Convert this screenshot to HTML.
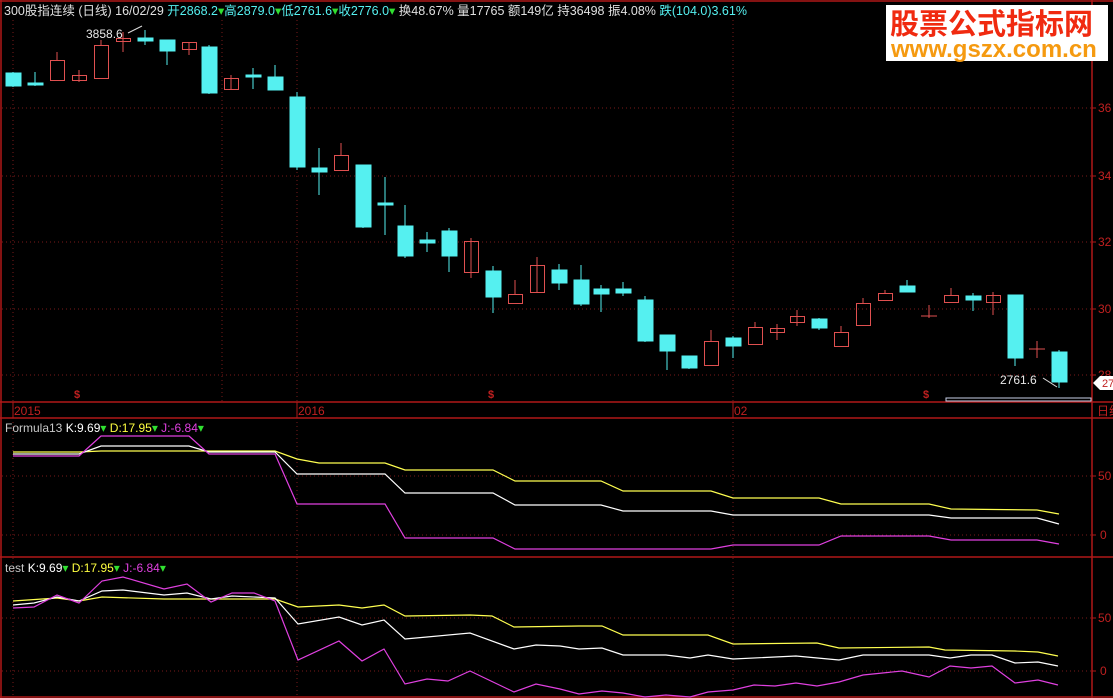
<!DOCTYPE html>
<html><head><meta charset="utf-8"><style>
html,body{margin:0;padding:0;background:#000;width:1113px;height:698px;overflow:hidden}
svg{display:block}
text{font-family:"Liberation Sans","Noto Sans CJK SC",sans-serif}
</style></head><body>
<svg width="1113" height="698" xmlns="http://www.w3.org/2000/svg">
<rect width="1113" height="698" fill="#000"/>
<!-- borders -->
<g stroke="#b01818" stroke-width="1.5" fill="none">
<line x1="1" y1="0" x2="1" y2="698"/>
<line x1="0" y1="1" x2="1113" y2="1"/>
<line x1="1092" y1="0" x2="1092" y2="698"/>
<line x1="0" y1="402" x2="1113" y2="402"/>
<line x1="0" y1="418" x2="1113" y2="418"/>
<line x1="0" y1="557" x2="1113" y2="557"/>
<line x1="0" y1="697" x2="1113" y2="697"/>
</g>
<!-- dotted grid -->
<g stroke="#7a1a1a" stroke-width="1" stroke-dasharray="1,3">
<line x1="2" y1="108" x2="1092" y2="108"/><line x1="2" y1="176" x2="1092" y2="176"/>
<line x1="2" y1="242" x2="1092" y2="242"/><line x1="2" y1="309" x2="1092" y2="309"/>
<line x1="2" y1="375" x2="1092" y2="375"/>
<line x1="2" y1="476" x2="1092" y2="476"/><line x1="2" y1="535" x2="1092" y2="535"/>
<line x1="2" y1="618" x2="1092" y2="618"/><line x1="2" y1="671" x2="1092" y2="671"/>
<line x1="13" y1="20" x2="13" y2="402"/><line x1="222" y1="20" x2="222" y2="402"/>
<line x1="297" y1="20" x2="297" y2="402"/><line x1="733" y1="20" x2="733" y2="402"/>
<line x1="13" y1="418" x2="13" y2="697"/><line x1="297" y1="418" x2="297" y2="697"/>
<line x1="733" y1="418" x2="733" y2="697"/>
</g>
<!-- date ticks -->
<g stroke="#b01818"><line x1="13" y1="402" x2="13" y2="418"/><line x1="297" y1="402" x2="297" y2="418"/><line x1="733" y1="402" x2="733" y2="418"/></g>
<g fill="#c02020" font-size="12">
<text x="14" y="415">2015</text><text x="298" y="415">2016</text><text x="734" y="415">02</text>
<text x="1097" y="415">日线</text>
<text x="1098" y="112">36</text><text x="1098" y="180">34</text><text x="1098" y="246">32</text><text x="1098" y="313">30</text><text x="1098" y="379">28</text>
<text x="1098" y="480">50</text><text x="1100" y="539">0</text>
<text x="1098" y="622">50</text><text x="1100" y="675">0</text>
<text x="74" y="398" font-weight="bold" font-size="11">$</text><text x="488" y="398" font-weight="bold" font-size="11">$</text><text x="923" y="398" font-weight="bold" font-size="11">$</text>
</g>
<g stroke="#b01818"><line x1="1092" y1="108" x2="1096" y2="108"/><line x1="1092" y1="176" x2="1096" y2="176"/><line x1="1092" y1="242" x2="1096" y2="242"/><line x1="1092" y1="309" x2="1096" y2="309"/><line x1="1092" y1="375" x2="1096" y2="375"/><line x1="1092" y1="476" x2="1096" y2="476"/><line x1="1092" y1="535" x2="1096" y2="535"/><line x1="1092" y1="618" x2="1096" y2="618"/><line x1="1092" y1="671" x2="1096" y2="671"/></g>
<!-- price tag -->
<polygon points="1093,383 1100,376 1113,376 1113,390 1100,390" fill="#fff"/>
<text x="1102" y="387" font-size="11" fill="#c02020">27</text>
<rect x="946" y="398" width="145" height="3" fill="none" stroke="#c8d0e8" stroke-width="1"/>
<!-- candles -->
<g stroke="#55f0f0" fill="#55f0f0">
<line x1="13" y1="72" x2="13" y2="87"/><rect x="6" y="73" width="15" height="13"/>
<line x1="35" y1="72" x2="35" y2="86"/><rect x="28" y="83" width="15" height="2"/>
<line x1="145" y1="30" x2="145" y2="45"/><rect x="138" y="38" width="15" height="3"/>
<line x1="167" y1="40" x2="167" y2="65"/><rect x="160" y="40" width="15" height="11"/>
<line x1="209" y1="45" x2="209" y2="94"/><rect x="202" y="47" width="15" height="46"/>
<line x1="253" y1="68" x2="253" y2="89"/><rect x="246" y="75" width="15" height="2"/>
<line x1="275" y1="65" x2="275" y2="90"/><rect x="268" y="77" width="15" height="13"/>
<line x1="297" y1="92" x2="297" y2="170"/><rect x="290" y="97" width="15" height="70"/>
<line x1="319" y1="148" x2="319" y2="195"/><rect x="312" y="168" width="15" height="4"/>
<line x1="363" y1="165" x2="363" y2="228"/><rect x="356" y="165" width="15" height="62"/>
<line x1="385" y1="177" x2="385" y2="235"/><rect x="378" y="203" width="15" height="2"/>
<line x1="405" y1="205" x2="405" y2="258"/><rect x="398" y="226" width="15" height="30"/>
<line x1="427" y1="232" x2="427" y2="252"/><rect x="420" y="240" width="15" height="3"/>
<line x1="449" y1="228" x2="449" y2="272"/><rect x="442" y="231" width="15" height="25"/>
<line x1="493" y1="266" x2="493" y2="313"/><rect x="486" y="271" width="15" height="26"/>
<line x1="559" y1="264" x2="559" y2="290"/><rect x="552" y="270" width="15" height="13"/>
<line x1="581" y1="265" x2="581" y2="306"/><rect x="574" y="280" width="15" height="24"/>
<line x1="601" y1="285" x2="601" y2="312"/><rect x="594" y="289" width="15" height="5"/>
<line x1="623" y1="282" x2="623" y2="296"/><rect x="616" y="289" width="15" height="4"/>
<line x1="645" y1="296" x2="645" y2="342"/><rect x="638" y="300" width="15" height="41"/>
<line x1="667" y1="335" x2="667" y2="370"/><rect x="660" y="335" width="15" height="16"/>
<line x1="689" y1="356" x2="689" y2="369"/><rect x="682" y="356" width="15" height="12"/>
<line x1="733" y1="336" x2="733" y2="358"/><rect x="726" y="338" width="15" height="8"/>
<line x1="819" y1="318" x2="819" y2="330"/><rect x="812" y="319" width="15" height="9"/>
<line x1="907" y1="280" x2="907" y2="292"/><rect x="900" y="286" width="15" height="6"/>
<line x1="973" y1="293" x2="973" y2="311"/><rect x="966" y="296" width="15" height="4"/>
<line x1="1015" y1="295" x2="1015" y2="366"/><rect x="1008" y="295" width="15" height="63"/>
<line x1="1059" y1="350" x2="1059" y2="388"/><rect x="1052" y="352" width="15" height="30"/>
</g>
<g stroke="#e05050" fill="none">
<line x1="57" y1="52" x2="57" y2="60"/><rect x="50.5" y="60.5" width="14" height="20"/>
<line x1="79" y1="70" x2="79" y2="82"/><rect x="72.5" y="75.5" width="14" height="5"/>
<line x1="101" y1="40" x2="101" y2="45"/><rect x="94.5" y="45.5" width="14" height="33"/>
<line x1="123" y1="32" x2="123" y2="52"/><rect x="116.5" y="38.5" width="14" height="3"/>
<line x1="189" y1="42" x2="189" y2="55"/><rect x="182.5" y="42.5" width="14" height="7"/>
<line x1="231" y1="75" x2="231" y2="90"/><rect x="224.5" y="78.5" width="14" height="11"/>
<line x1="341" y1="143" x2="341" y2="155"/><rect x="334.5" y="155.5" width="14" height="15"/>
<line x1="471" y1="238" x2="471" y2="278"/><rect x="464.5" y="241.5" width="14" height="31"/>
<line x1="515" y1="280" x2="515" y2="294"/><rect x="508.5" y="294.5" width="14" height="9"/>
<line x1="537" y1="257" x2="537" y2="293"/><rect x="530.5" y="265.5" width="14" height="27"/>
<line x1="711" y1="330" x2="711" y2="341"/><rect x="704.5" y="341.5" width="14" height="24"/>
<line x1="755" y1="322" x2="755" y2="327"/><rect x="748.5" y="327.5" width="14" height="17"/>
<line x1="777" y1="324" x2="777" y2="340"/><rect x="770.5" y="328.5" width="14" height="4"/>
<line x1="797" y1="310" x2="797" y2="326"/><rect x="790.5" y="316.5" width="14" height="6"/>
<line x1="841" y1="326" x2="841" y2="332"/><rect x="834.5" y="332.5" width="14" height="14"/>
<line x1="863" y1="298" x2="863" y2="303"/><rect x="856.5" y="303.5" width="14" height="22"/>
<line x1="885" y1="290" x2="885" y2="293"/><rect x="878.5" y="293.5" width="14" height="7"/>
<line x1="929" y1="305" x2="929" y2="318"/><line x1="921" y1="316" x2="937" y2="316"/>
<line x1="951" y1="288" x2="951" y2="295"/><rect x="944.5" y="295.5" width="14" height="7"/>
<line x1="993" y1="292" x2="993" y2="315"/><rect x="986.5" y="295.5" width="14" height="7"/>
<line x1="1037" y1="341" x2="1037" y2="358"/><line x1="1029" y1="349" x2="1045" y2="349"/>
</g>
<text x="86" y="38" font-size="12" fill="#e8e8e8">3858.6</text>
<line x1="128" y1="33" x2="142" y2="26" stroke="#ddd"/>
<text x="1000" y="384" font-size="12" fill="#e8e8e8">2761.6</text>
<line x1="1043" y1="378" x2="1057" y2="387" stroke="#ddd"/>
<!-- header -->
<text x="4" y="15" font-size="12.5"><tspan fill="#e0e0e0">300股指连续 (日线) 16/02/29 </tspan><tspan fill="#55f0f0">开2868.2</tspan><tspan fill="#30e030">▾</tspan><tspan fill="#55f0f0">高2879.0</tspan><tspan fill="#30e030">▾</tspan><tspan fill="#55f0f0">低2761.6</tspan><tspan fill="#30e030">▾</tspan><tspan fill="#55f0f0">收2776.0</tspan><tspan fill="#30e030">▾</tspan><tspan fill="#e0e0e0"> 换48.67% 量17765 额149亿 持36498 振4.08% </tspan><tspan fill="#55f0f0">跌(104.0)3.61%</tspan></text>
<!-- logo -->
<rect x="886" y="5" width="222" height="56" fill="#fff"/>
<text x="890" y="34" font-size="29" font-weight="bold" fill="#f02a10">股票公式指标网</text>
<text x="891" y="57" font-size="24" font-weight="bold" fill="#f59a10">www.gszx.com.cn</text>
<!-- panel 2 -->
<text x="5" y="432" font-size="12"><tspan fill="#c8c8c8">Formula13 </tspan><tspan fill="#fff">K:9.69</tspan><tspan fill="#30e030">▾</tspan><tspan fill="#ffff40"> D:17.95</tspan><tspan fill="#30e030">▾</tspan><tspan fill="#e040e0"> J:-6.84</tspan><tspan fill="#30e030">▾</tspan></text>
<g fill="none" stroke-width="1.2">
<polyline stroke="#ffff50" points="13,452 79,452 101,451 189,451 209,451 275,451 297,459 319,463 385,463 405,470 493,470 515,481 601,481 623,491 711,491 733,498 819,498 841,504 929,504 951,509 1037,510 1059,514"/>
<polyline stroke="#ffffff" points="13,454 79,454 101,446 189,446 209,452 275,452 297,474 385,474 405,493 493,493 515,505 601,505 623,511 711,511 733,515 929,515 951,518 1037,518 1059,524"/>
<polyline stroke="#e040e0" points="13,456 79,456 101,436 189,436 209,454 275,454 297,504 385,504 405,538 493,538 515,549 711,549 733,545 819,545 841,536 929,536 951,540 1037,540 1059,544"/>
</g>
<!-- panel 3 -->
<text x="5" y="572" font-size="12"><tspan fill="#c8c8c8">test </tspan><tspan fill="#fff">K:9.69</tspan><tspan fill="#30e030">▾</tspan><tspan fill="#ffff40"> D:17.95</tspan><tspan fill="#30e030">▾</tspan><tspan fill="#e040e0"> J:-6.84</tspan><tspan fill="#30e030">▾</tspan></text>
<g fill="none" stroke-width="1.2">
<polyline stroke="#ffff50" points="13,601 57,598 79,601 102,597 164,599 211,599 275,599 298,607 339,605 362,608 384,605 405,616 470,615 492,616 514,627 579,626 602,626 623,635 708,635 733,644 817,643 839,648 929,647 945,650 1015,651 1038,652 1058,656"/>
<polyline stroke="#ffffff" points="13,605 34,603 57,597 79,601 102,591 123,590 164,595 187,593 211,599 232,596 275,598 298,624 339,617 362,625 384,620 405,639 427,637 470,633 514,649 536,645 560,646 579,649 602,648 623,655 666,655 690,658 708,655 733,659 796,656 839,660 863,655 929,655 950,658 971,655 992,655 1015,663 1038,662 1058,666"/>
<polyline stroke="#e040e0" points="13,608 34,607 57,595 79,603 102,581 123,577 164,589 187,584 211,602 232,593 254,593 275,601 298,660 339,641 362,661 384,649 405,684 427,679 448,681 470,671 514,692 536,684 560,689 579,694 602,691 623,693 645,697 666,695 690,697 708,692 733,690 754,685 775,686 796,683 817,686 839,682 863,675 902,671 929,677 950,666 971,668 992,666 1015,683 1038,680 1058,685"/>
</g>
</svg>
</body></html>
